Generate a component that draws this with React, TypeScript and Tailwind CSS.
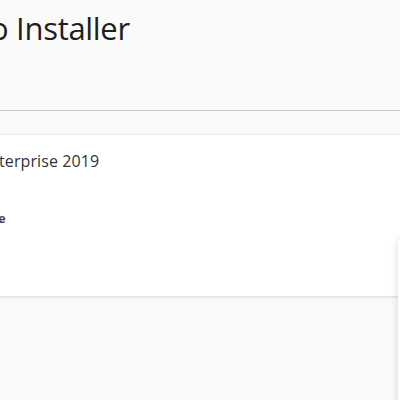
import React from "react";

export default function App() {
  return (
    <div
      className="relative w-[400px] h-[400px] overflow-hidden bg-[#fafafa] text-[#1e1e1e]"
      style={{ fontFamily: '"Segoe UI", "Open Sans", "Noto Sans", sans-serif' }}
    >
      <div className="h-[111px] border-b border-[#c8c8c8] pt-[6px]">
        <h1 className="ml-[-10px] whitespace-nowrap text-[31px] font-normal leading-[44px] tracking-[-0.3px]">
          o Installer
        </h1>
      </div>
      <div className="mt-[23px] h-[162px] bg-white border-t border-[#ececec] shadow-[0_1px_3px_rgba(0,0,0,0.15)]">
        <div className="ml-[-1px] pt-[14px] whitespace-nowrap text-[16px] leading-[24px] tracking-[0.1px] text-[#333]">
          terprise 2019
        </div>
        <div className="ml-[-2px] mt-[37px] whitespace-nowrap text-[13px] font-bold leading-[16px] text-[#444]">
          e
        </div>
      </div>
      <div className="absolute left-[398px] top-[240px] h-[200px] w-[300px] bg-white shadow-[0_0_8px_rgba(0,0,0,0.14)]" />
    </div>
  );
}
